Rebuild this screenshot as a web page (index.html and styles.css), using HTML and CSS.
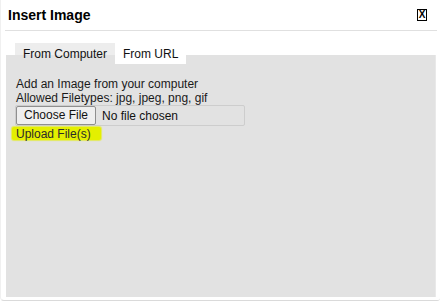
FILE: index.html
```html
<!DOCTYPE html>
<html>
<head>
<meta charset="utf-8">
<link rel="stylesheet" href="styles.css">
</head>
<body>
<div class="dialog">
  <div class="header">
    <span class="title">Insert Image</span>
    <span class="close">X</span>
  </div>
  <div class="body">
    <div class="tabs">
      <span class="tab tab-computer">From Computer</span>
      <span class="tab tab-url">From URL</span>
    </div>
    <div class="panel">
      <div class="line">Add an Image from your computer</div>
      <div class="line">Allowed Filetypes: jpg, jpeg, png, gif</div>
      <div class="file">
        <span class="file-btn">Choose File</span>
        <span class="file-name">No file chosen</span>
      </div>
      <div class="upload"><span class="mark">Upload File(s)</span></div>
    </div>
  </div>
</div>
</body>
</html>
```
FILE: styles.css
```css
html, body {
  margin: 0;
  padding: 0;
  background: #fff;
}
body {
  font-family: "Liberation Sans", Arial, sans-serif;
  font-size: 12px;
  color: #1a1a1a;
}
.dialog {
  width: 440px;
  height: 301px;
  box-sizing: border-box;
  border-bottom: 1px solid #dadada;
  border-left: 1px solid #f0f0f0;
  border-radius: 0 0 3px 4px;
}
.header {
  margin: 0 3px 0 4px;
  height: 30px;
  border-bottom: 1px solid #e0e0e0;
  display: flex;
  align-items: center;
  justify-content: space-between;
}
.title {
  padding-left: 3px;
  font-size: 14px;
  font-weight: bold;
  color: #000;
  line-height: 16px;
}
.close {
  width: 8px;
  height: 10px;
  border: 1px solid #000;
  margin-right: 10px;
  font-size: 10px;
  font-weight: bold;
  line-height: 10px;
  text-align: center;
  color: #000;
}
.body {
  padding-left: 5px;
}
.tabs {
  margin-top: 12px;
  padding-left: 9px;
  height: 22px;
  margin-bottom: -10px;
  display: flex;
  position: relative;
  z-index: 1;
}
.tab {
  box-sizing: border-box;
  line-height: 14px;
  color: #111;
}
.tab-computer {
  width: 100px;
  height: 22px;
  padding: 4px 0 0 8px;
  background: linear-gradient(#ededed 0, #ededed 12px, #e2e2e2 12px);
}
.tab-url {
  width: 71px;
  height: 19px;
  margin-top: 2px;
  padding: 2px 0 0 8px;
  background: #fff;
}
.panel {
  width: 430px;
  height: 242px;
  box-sizing: border-box;
  background: #e2e2e2;
  border-right: 1px solid #e9e9e9;
  padding: 22px 0 0 10px;
}
.line {
  line-height: 14px;
  height: 14px;
}
.file {
  width: 230px;
  height: 21px;
  margin-left: -1px;
  box-sizing: border-box;
  border: 1px solid #cdcdcd;
  border-radius: 2px;
  display: flex;
  align-items: center;
}
.file-btn {
  box-sizing: border-box;
  width: 80px;
  height: 19px;
  line-height: 17px;
  text-align: center;
  background: #efefef;
  border: 1px solid #8f8f8f;
  border-radius: 2px;
  color: #111;
}
.file-name {
  margin-left: 6px;
  color: #111;
}
.upload {
  height: 14px;
  margin-top: 1px;
  line-height: 14px;
}
.mark {
  display: inline-block;
  margin-left: -4px;
  padding: 0 4px;
  height: 13px;
  line-height: 14px;
  width: 81px;
  background: #e4ef00;
  border-radius: 2px;
  box-shadow: 0 0 1px 1px rgba(228, 239, 0, 0.6);
  color: #2a2a2a;
}
```
